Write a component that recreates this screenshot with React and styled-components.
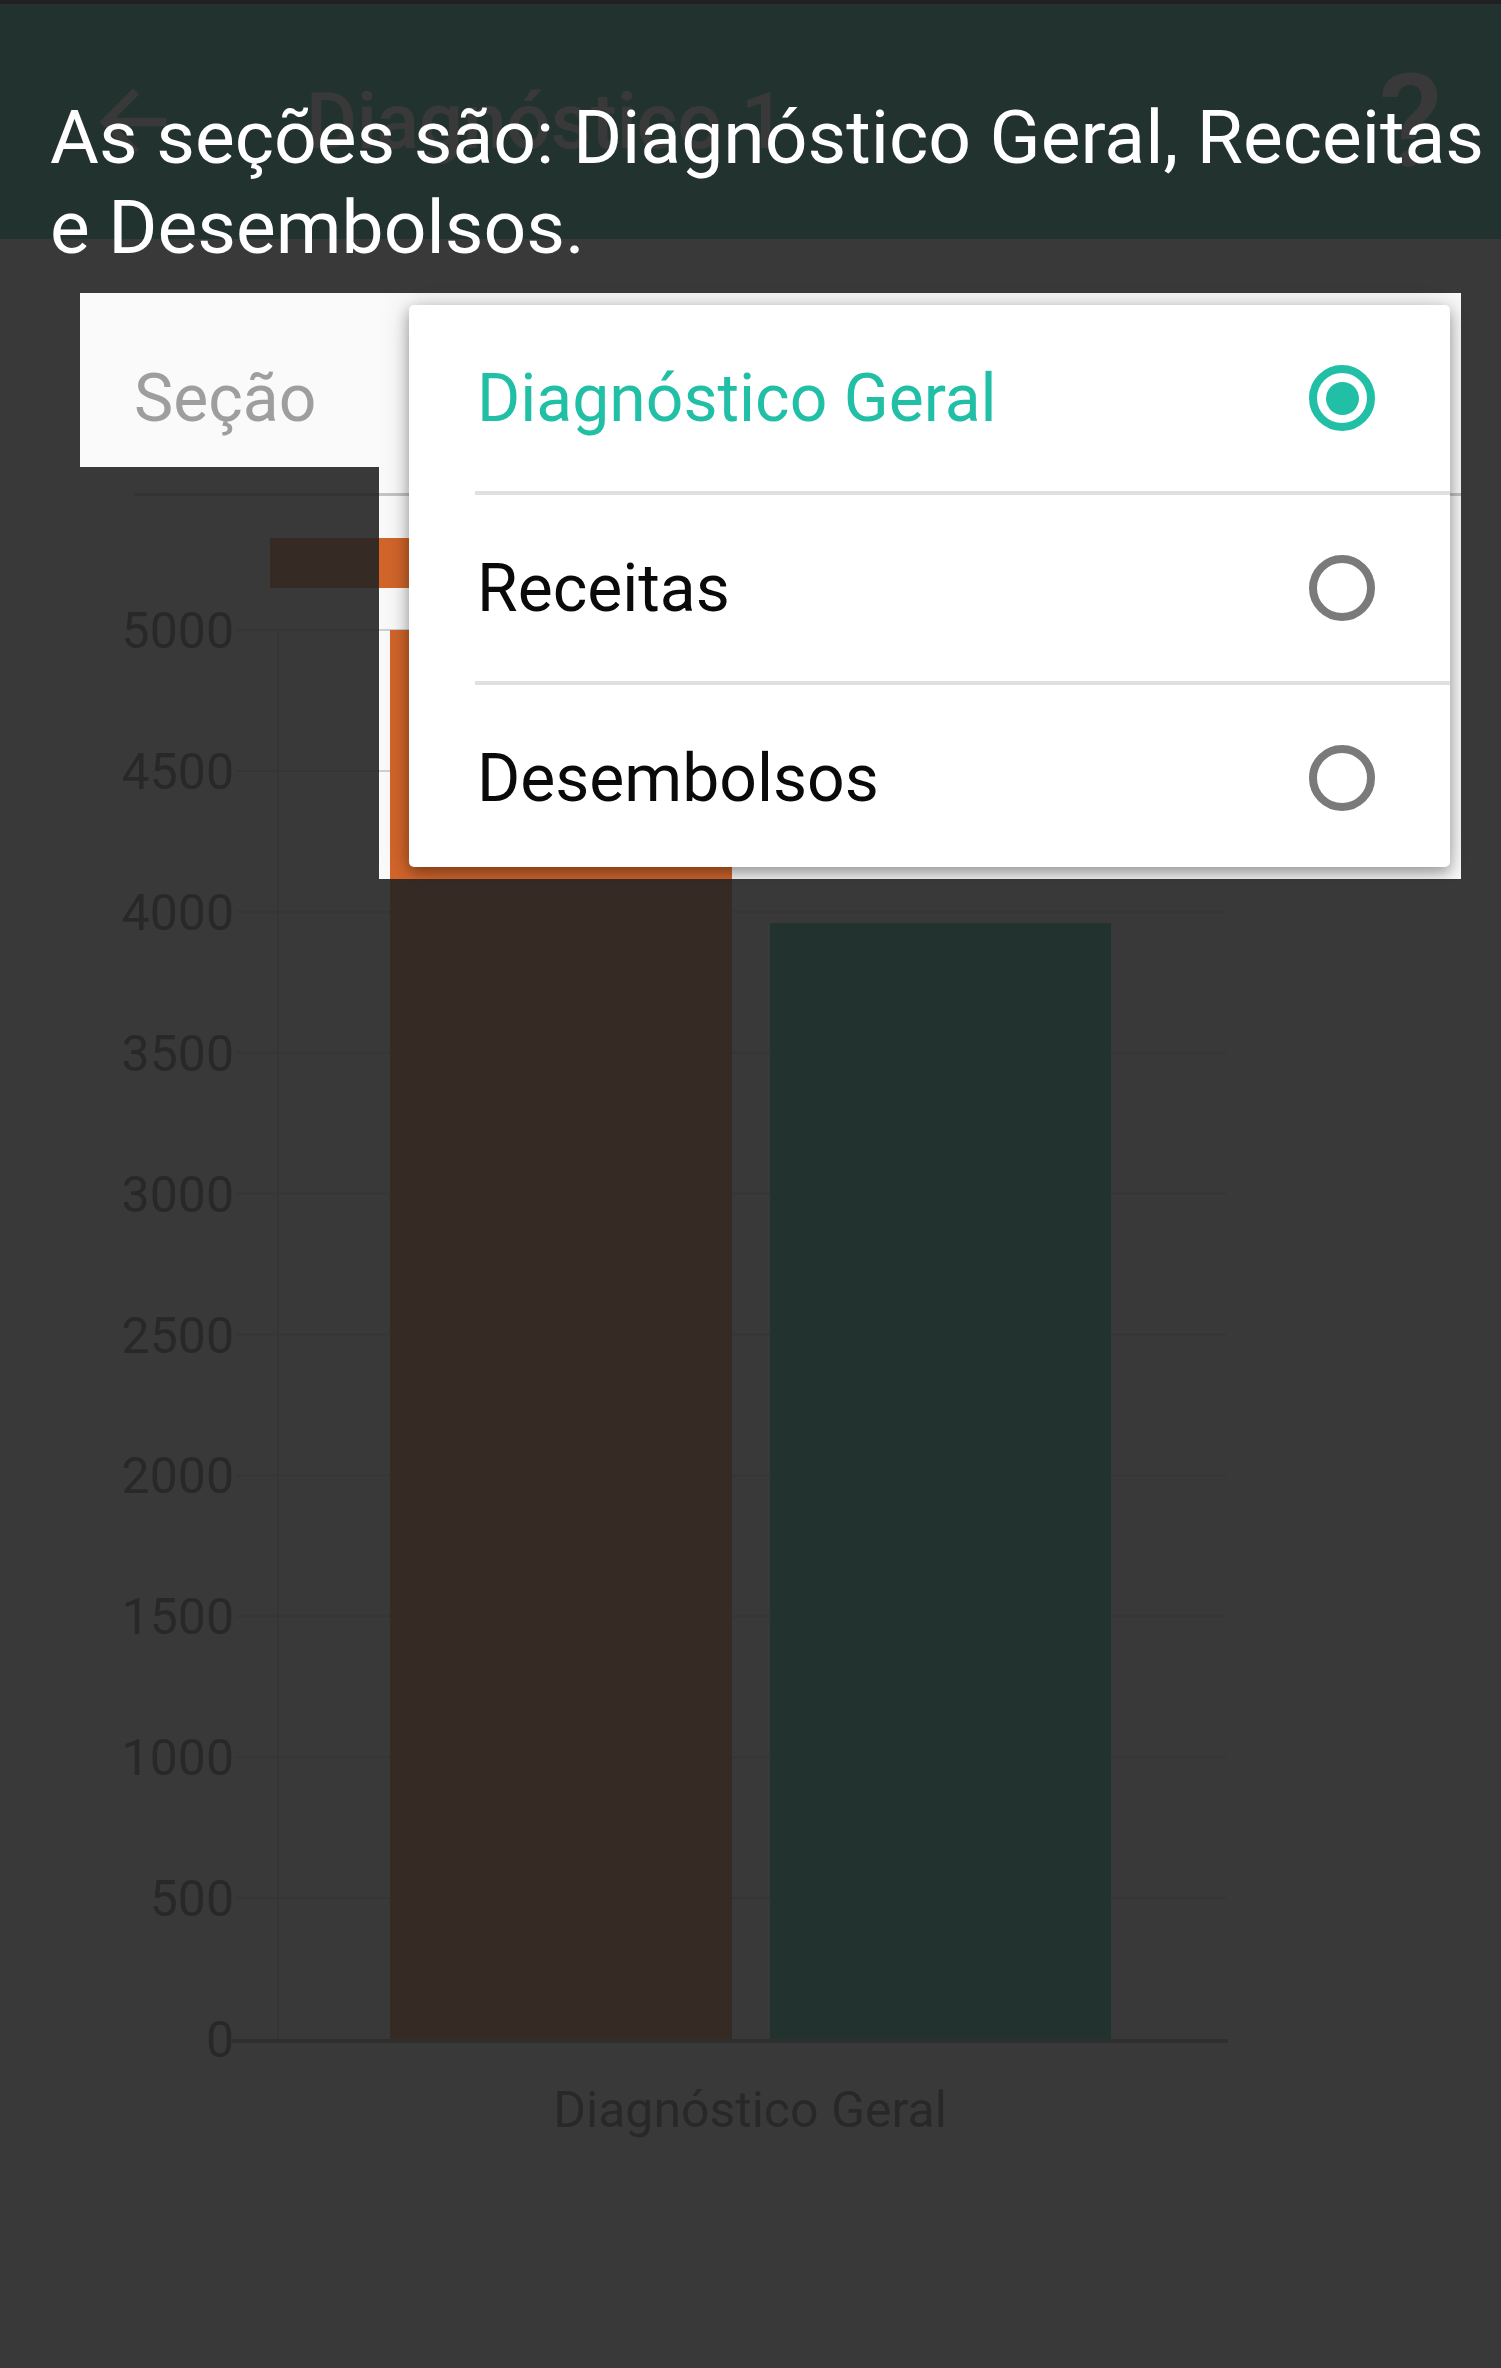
import React from "react";
import styled, { createGlobalStyle } from "styled-components";

const GlobalStyle = createGlobalStyle`
  html, body {
    margin: 0;
    padding: 0;
    background: #383838;
  }
  body {
    font-family: Roboto, "Noto Sans", sans-serif;
  }
`;

const Screen = styled.div`
  position: relative;
  width: 1501px;
  height: 2368px;
  overflow: hidden;
  background: #fafafa;
  display: flex;
  flex-direction: column;
`;

const StatusStrip = styled.div`
  flex: none;
  height: 4px;
  background: #000;
`;

const AppBar = styled.header`
  flex: none;
  height: 235px;
  display: flex;
  align-items: center;
  padding: 0 59px 0 83px;
  background: #1abc9c;
  color: #fff;
`;

const Title = styled.h1`
  flex: 1;
  margin: 0 0 0 123px;
  font-size: 78px;
  font-weight: 500;
  line-height: 1;
`;

const Help = styled.span`
  font-size: 130px;
  font-weight: 500;
  line-height: 1;
`;

const Body = styled.main`
  flex: 1;
  display: flex;
  flex-direction: column;
  padding-top: 54px;
`;

const SelectField = styled.div`
  height: 174px;
  box-sizing: border-box;
  margin: 0 40px 0 80px;
  padding: 67px 0 0 54px;
  background: #fafafa;
  color: #9e9e9e;
  font-size: 66px;
`;

const FieldRule = styled.div`
  height: 3px;
  margin: 26px 40px 0 134px;
  background: #c4c4c4;
`;

const Chart = styled.svg`
  display: block;
  width: 1501px;
  height: 1872px;
  font-family: Roboto, sans-serif;
`;

// menu aberto do spinner
const Menu = styled.ul`
  position: absolute;
  left: 409px;
  top: 305px;
  z-index: 2;
  width: 1041px;
  height: 562px;
  margin: 0;
  padding: 0;
  list-style: none;
  overflow: hidden;
  background: #fff;
  border-radius: 5px;
  box-shadow: 0 6px 14px rgba(0, 0, 0, 0.32), 0 0 30px rgba(0, 0, 0, 0.18);
`;

const Option = styled.li`
  height: 186px;
  display: flex;
  align-items: center;
  justify-content: space-between;
  margin-left: 66px;
  padding: 0 75px 0 2px;
  font-size: 66px;
  color: ${(p) => (p.$selected ? "#20bfa6" : "#0a0a0a")};

  & + & {
    border-top: 4px solid #e0e0e0;
  }
`;

const Radio = styled.span`
  width: 66px;
  height: 66px;
  box-sizing: border-box;
  display: flex;
  align-items: center;
  justify-content: center;
  border-radius: 50%;
  border: 8px solid ${(p) => (p.$checked ? "#20bfa6" : "#7a7a7a")};

  &::after {
    content: "";
    display: ${(p) => (p.$checked ? "block" : "none")};
    width: 33px;
    height: 33px;
    border-radius: 50%;
    background: #20bfa6;
  }
`;

const Dim = styled.div`
  position: absolute;
  inset: 0;
  z-index: 3;
  pointer-events: none;
  background: rgba(35, 35, 35, 0.9);
  clip-path: polygon(
    0 0, 1501px 0, 1501px 2368px, 0 2368px, 0 293px,
    80px 293px, 80px 467px, 379px 467px, 379px 879px,
    1461px 879px, 1461px 293px, 0 293px
  );
`;

const Hint = styled.p`
  position: absolute;
  left: 50px;
  top: 92px;
  z-index: 4;
  margin: 0;
  color: #fff;
  font-size: 75px;
  line-height: 90px;
  white-space: nowrap;
`;

const ticks = [0, 500, 1000, 1500, 2000, 2500, 3000, 3500, 4000, 4500, 5000];
const yOf = (v) => 2039 - (v / 500) * 140.9;

const series = [
  { nome: "Receitas", valor: 5000, cor: "#d2652b", x: 390, w: 342, lx: 270 },
  { nome: "Desembolsos", valor: 3960, cor: "#1abc9c", x: 770, w: 341, lx: 720 },
];

const opcoes = ["Diagnóstico Geral", "Receitas", "Desembolsos"];

function BackArrow() {
  return (
    <svg width="100" height="100" viewBox="0 0 24 24" fill="#fff">
      <path d="M20 11H7.83l5.59-5.59L12 4l-8 8 8 8 1.41-1.41L7.83 13H20v-2z" />
    </svg>
  );
}

export default function App() {
  return (
    <>
      <GlobalStyle />
      <Screen>
        <StatusStrip />
        <AppBar>
          <BackArrow />
          <Title>Diagnóstico 1</Title>
          <Help>?</Help>
        </AppBar>
        <Body>
          <SelectField>Seção</SelectField>
          <FieldRule />
          <Chart viewBox="0 496 1501 1872">
            {/* legenda: só as caixas aparecem, o resto fica sob o menu */}
            {series.map((s) => (
              <rect key={s.nome} x={s.lx} y="538" width="150" height="50" fill={s.cor} />
            ))}
            <line x1="278" y1="630" x2="278" y2="2039" stroke="#d0d0d0" strokeWidth="2" />
            {ticks.map((t) => (
              <g key={t}>
                {t > 0 && (
                  <line x1="237" y1={yOf(t)} x2="1226" y2={yOf(t)} stroke="#d0d0d0" strokeWidth="2" />
                )}
                <text x="234" y={yOf(t)} dy="0.36em" textAnchor="end" fontSize="50" fill="#555">
                  {t}
                </text>
              </g>
            ))}
            {series.map((s) => (
              <rect
                key={s.nome + "-bar"}
                x={s.x}
                y={yOf(s.valor)}
                width={s.w}
                height={2039 - yOf(s.valor)}
                fill={s.cor}
              />
            ))}
            <line x1="232" y1="2041" x2="1228" y2="2041" stroke="#979797" strokeWidth="4" />
            <text x="750" y="2127" textAnchor="middle" fontSize="50" fill="#555">
              Diagnóstico Geral
            </text>
          </Chart>
        </Body>
        <Menu>
          {opcoes.map((o, i) => (
            <Option key={o} $selected={i === 0}>
              {o}
              <Radio $checked={i === 0} />
            </Option>
          ))}
        </Menu>
        <Dim />
        <Hint>
          As seções são: Diagnóstico Geral, Receitas
          <br />e Desembolsos.
        </Hint>
      </Screen>
    </>
  );
}
